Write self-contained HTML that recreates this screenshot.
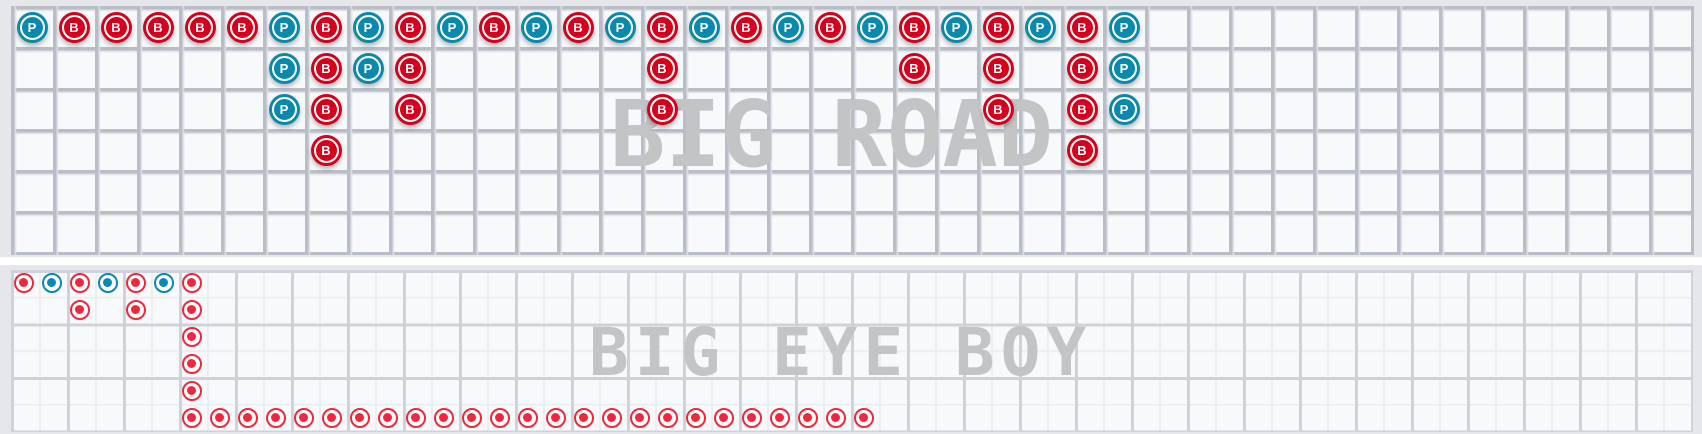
<!DOCTYPE html>
<html><head><meta charset="utf-8"><style>
html,body{margin:0;padding:0;background:#fff;width:1702px;height:434px;overflow:hidden;position:relative;font-family:"Liberation Sans",sans-serif}
#p1{position:absolute;left:0;top:0;width:1702px;height:257px;background:#e6e7eb}
#g1{position:absolute;left:11px;top:6px;width:1683px;height:249px;background-color:#f8f9fb;
background-image:linear-gradient(90deg,#b8bdc6 0,#b8bdc6 3px,#dde0e5 4px,transparent 6px),linear-gradient(180deg,#b8bdc6 0,#b8bdc6 3px,#dde0e5 4px,transparent 6px);
background-size:42px 100%,100% 41px}
#p2{position:absolute;left:0;top:265px;width:1702px;height:169px;background:#e6e7eb}
#g2{position:absolute;left:11px;top:5px;width:1682px;height:162px;background-color:#f8f9fb;
background-image:linear-gradient(90deg,#cfd3d9 0,#cfd3d9 3px,transparent 3px),linear-gradient(180deg,#cfd3d9 0,#cfd3d9 3px,transparent 3px),linear-gradient(90deg,#eceef1 0,#eceef1 2px,transparent 2px),linear-gradient(180deg,#eceef1 0,#eceef1 2px,transparent 2px);
background-size:56px 100%,100% 53.5px,28px 100%,100% 26.75px}
.t{position:absolute;font-family:"DejaVu Sans Mono","Liberation Mono",monospace;font-weight:bold;color:#c3c4c6;white-space:pre;line-height:1}
.b{position:absolute;width:31px;height:31px;margin:-15.5px 0 0 -15.5px;border-radius:50%;box-shadow:0 3px 4px rgba(0,0,0,.25);color:#fff;font-weight:bold;font-size:13px;line-height:31px;text-align:center}
.b::before{content:"";position:absolute;left:3px;top:3px;width:21px;height:21px;border:2px solid #fff;border-radius:50%}
.R{background:#d5001b}.P{background:#0a89ad}
.d{position:absolute;width:16px;height:16px;margin:-10.5px 0 0 -10.5px;border-radius:50%;border:2.5px solid #f0283c;background:#fff}
.d::after{content:"";position:absolute;left:3.5px;top:3.5px;width:9px;height:9px;border-radius:50%;background:#f0283c}
.d.u{border-color:#0b89b1}.d.u::after{background:#0b89b1}
</style></head><body>
<div id="p1"><div id="g1"></div></div>
<div id="p2"><div id="g2"></div></div>
<div class="t" style="left:610px;top:89px;font-size:92px">BIG ROAD</div>
<div class="t" style="left:589px;top:320px;font-size:66px;letter-spacing:6px">BIG EYE BOY</div>

<div class="b P" style="left:32px;top:27px">P</div>
<div class="b R" style="left:74px;top:27px">B</div>
<div class="b R" style="left:116px;top:27px">B</div>
<div class="b R" style="left:158px;top:27px">B</div>
<div class="b R" style="left:200px;top:27px">B</div>
<div class="b R" style="left:242px;top:27px">B</div>
<div class="b P" style="left:284px;top:27px">P</div>
<div class="b R" style="left:326px;top:27px">B</div>
<div class="b P" style="left:368px;top:27px">P</div>
<div class="b R" style="left:410px;top:27px">B</div>
<div class="b P" style="left:452px;top:27px">P</div>
<div class="b R" style="left:494px;top:27px">B</div>
<div class="b P" style="left:536px;top:27px">P</div>
<div class="b R" style="left:578px;top:27px">B</div>
<div class="b P" style="left:620px;top:27px">P</div>
<div class="b R" style="left:662px;top:27px">B</div>
<div class="b P" style="left:704px;top:27px">P</div>
<div class="b R" style="left:746px;top:27px">B</div>
<div class="b P" style="left:788px;top:27px">P</div>
<div class="b R" style="left:830px;top:27px">B</div>
<div class="b P" style="left:872px;top:27px">P</div>
<div class="b R" style="left:914px;top:27px">B</div>
<div class="b P" style="left:956px;top:27px">P</div>
<div class="b R" style="left:998px;top:27px">B</div>
<div class="b P" style="left:1040px;top:27px">P</div>
<div class="b R" style="left:1082px;top:27px">B</div>
<div class="b P" style="left:1124px;top:27px">P</div>
<div class="b P" style="left:284px;top:68px">P</div>
<div class="b R" style="left:326px;top:68px">B</div>
<div class="b P" style="left:368px;top:68px">P</div>
<div class="b R" style="left:410px;top:68px">B</div>
<div class="b R" style="left:662px;top:68px">B</div>
<div class="b R" style="left:914px;top:68px">B</div>
<div class="b R" style="left:998px;top:68px">B</div>
<div class="b R" style="left:1082px;top:68px">B</div>
<div class="b P" style="left:1124px;top:68px">P</div>
<div class="b P" style="left:284px;top:109px">P</div>
<div class="b R" style="left:326px;top:109px">B</div>
<div class="b R" style="left:410px;top:109px">B</div>
<div class="b R" style="left:662px;top:109px">B</div>
<div class="b R" style="left:998px;top:109px">B</div>
<div class="b R" style="left:1082px;top:109px">B</div>
<div class="b P" style="left:1124px;top:109px">P</div>
<div class="b R" style="left:326px;top:150px">B</div>
<div class="b R" style="left:1082px;top:150px">B</div>

<div class="d" style="left:24px;top:283px"></div>
<div class="d u" style="left:52px;top:283px"></div>
<div class="d" style="left:80px;top:283px"></div>
<div class="d u" style="left:108px;top:283px"></div>
<div class="d" style="left:136px;top:283px"></div>
<div class="d u" style="left:164px;top:283px"></div>
<div class="d" style="left:192px;top:283px"></div>
<div class="d" style="left:80px;top:310px"></div>
<div class="d" style="left:136px;top:310px"></div>
<div class="d" style="left:192px;top:310px"></div>
<div class="d" style="left:192px;top:337px"></div>
<div class="d" style="left:192px;top:364px"></div>
<div class="d" style="left:192px;top:391px"></div>
<div class="d" style="left:192px;top:418px"></div>
<div class="d" style="left:220px;top:418px"></div>
<div class="d" style="left:248px;top:418px"></div>
<div class="d" style="left:276px;top:418px"></div>
<div class="d" style="left:304px;top:418px"></div>
<div class="d" style="left:332px;top:418px"></div>
<div class="d" style="left:360px;top:418px"></div>
<div class="d" style="left:388px;top:418px"></div>
<div class="d" style="left:416px;top:418px"></div>
<div class="d" style="left:444px;top:418px"></div>
<div class="d" style="left:472px;top:418px"></div>
<div class="d" style="left:500px;top:418px"></div>
<div class="d" style="left:528px;top:418px"></div>
<div class="d" style="left:556px;top:418px"></div>
<div class="d" style="left:584px;top:418px"></div>
<div class="d" style="left:612px;top:418px"></div>
<div class="d" style="left:640px;top:418px"></div>
<div class="d" style="left:668px;top:418px"></div>
<div class="d" style="left:696px;top:418px"></div>
<div class="d" style="left:724px;top:418px"></div>
<div class="d" style="left:752px;top:418px"></div>
<div class="d" style="left:780px;top:418px"></div>
<div class="d" style="left:808px;top:418px"></div>
<div class="d" style="left:836px;top:418px"></div>
<div class="d" style="left:864px;top:418px"></div>
</body></html>
